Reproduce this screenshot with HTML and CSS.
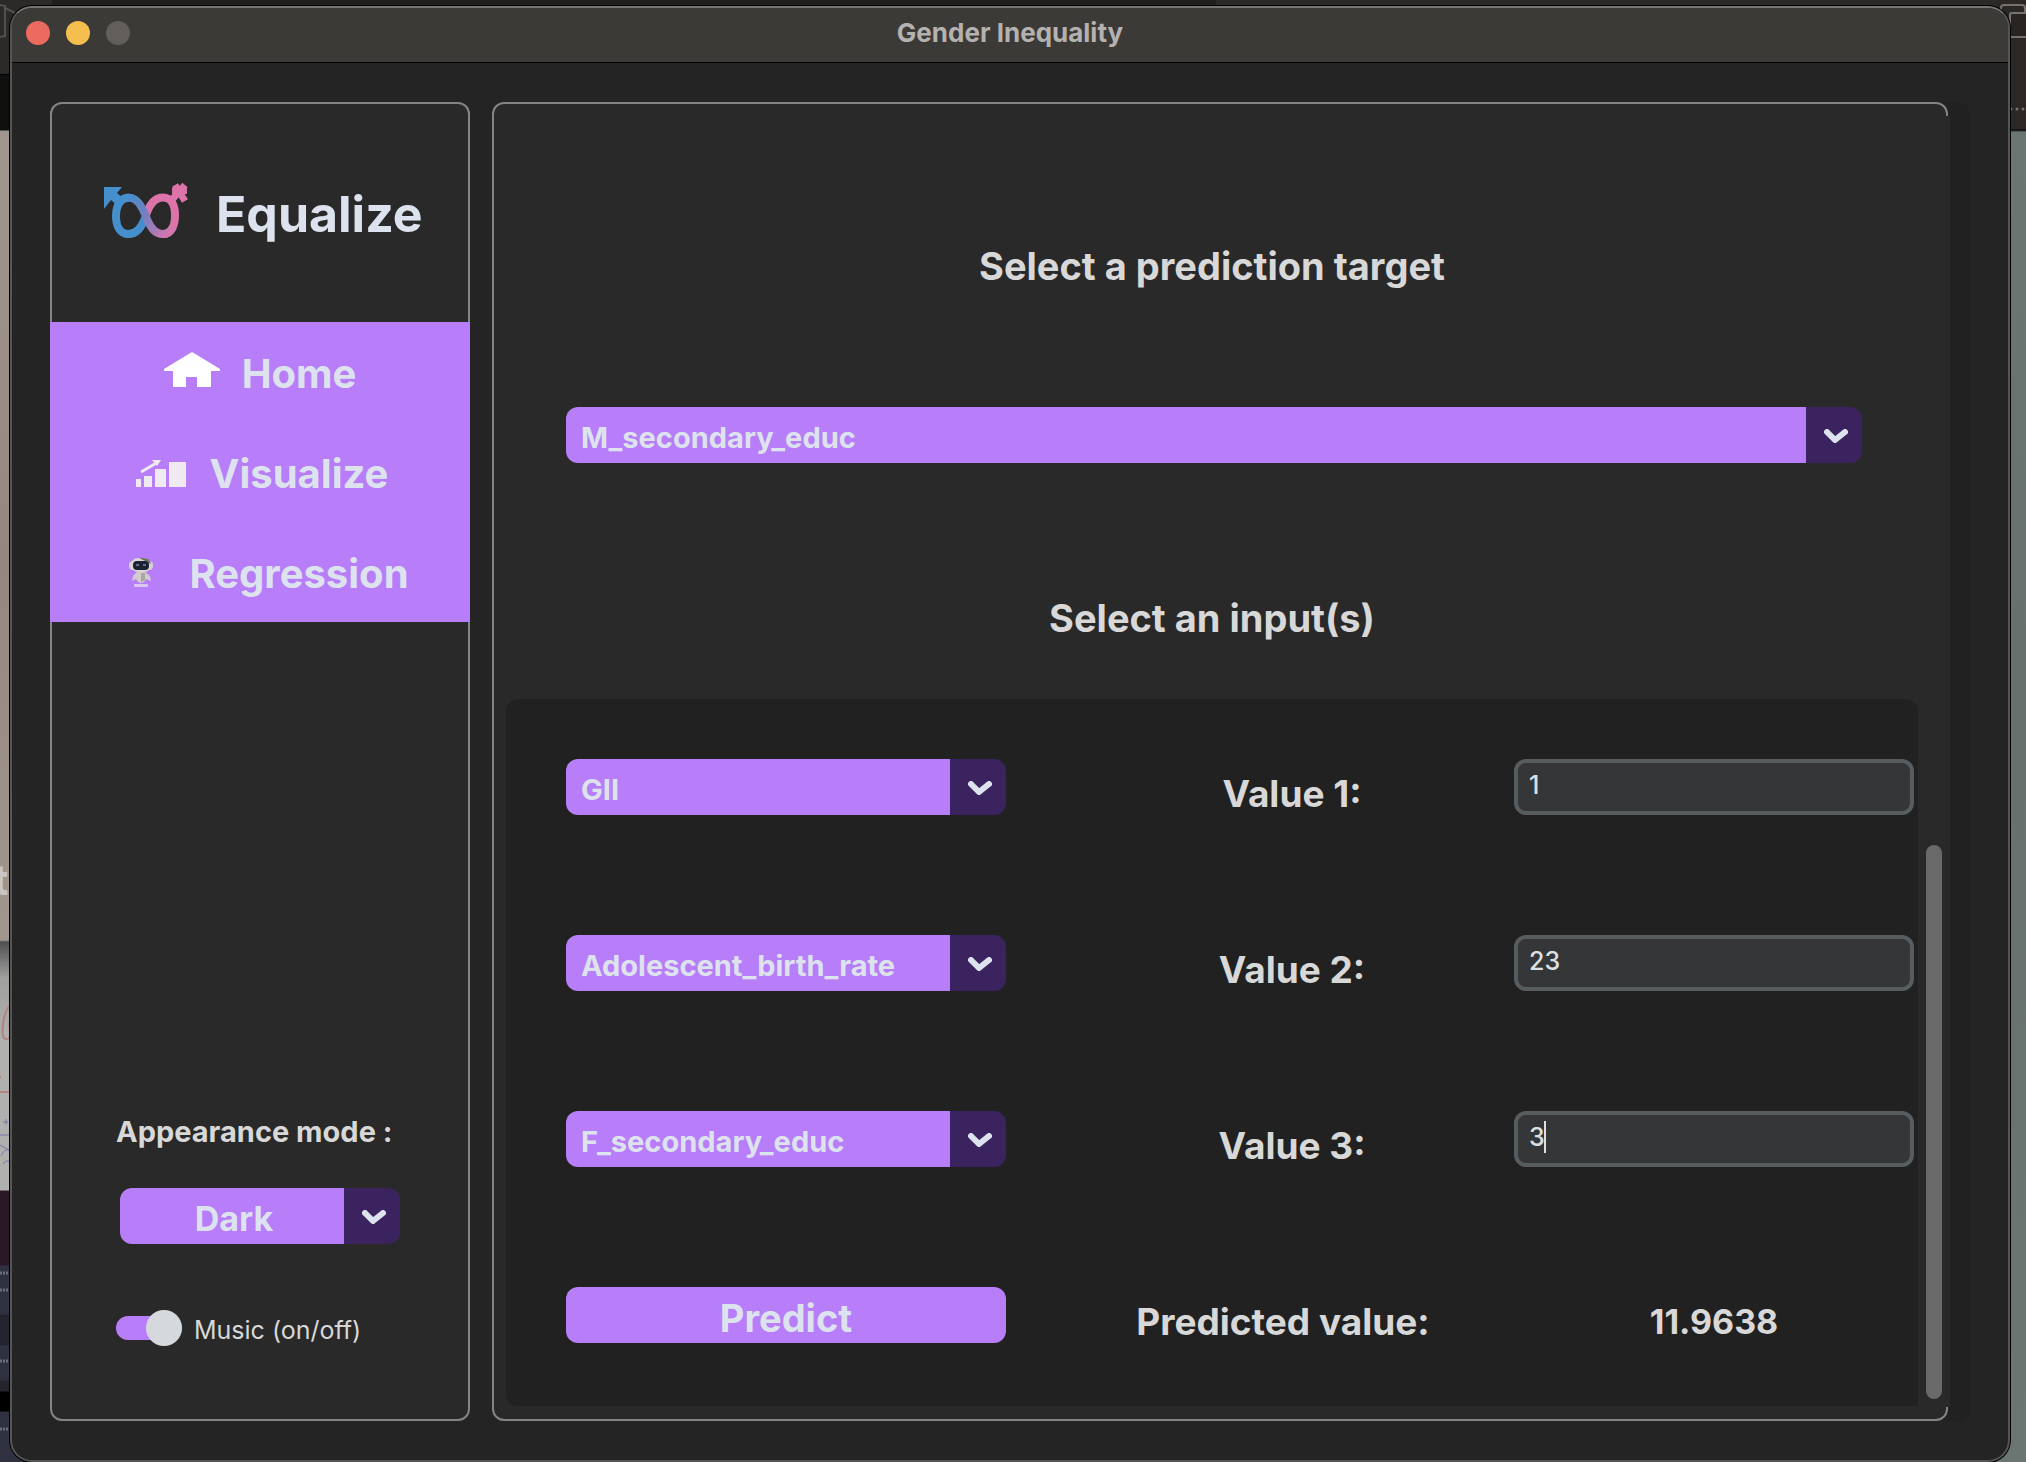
FILE: index.html
```html
<!DOCTYPE html>
<html lang="en">
<head>
<meta charset="utf-8">
<meta name="viewport" content="width=device-width, initial-scale=1">
<title>Gender Inequality</title>
<link rel="stylesheet" href="styles.css">
</head>
<body>
<div class="desktop" aria-hidden="true">
  <div class="desktop-top"></div>
  <div class="desktop-left">
    <svg width="30" height="1462" viewBox="0 0 30 1462" fill="none">
      <path d="M0 5l5 1v30l-5 1M5 8l10 5" stroke="#54504d" stroke-width="2"/>
      <path d="M0 967v2M9 1006q-5 8-6 18q-2 16 4 15t2-16M0 1076v2M0 1092h9" stroke="#b08480" stroke-width="2"/>
      <path d="M3 1122h5M6 1119v6M0 1135h9M0 1145l9 5M1 1156q4-8 8-6M3 1164q2-4 6-3" stroke="#8473a8" stroke-width="1"/>
      <path d="M0 1273h9M0 1290h9M0 1361h9M0 1429h9" stroke="#6a6c7b" stroke-width="3" stroke-dasharray="2 1"/>
    </svg>
    <span class="desktop-letter">t</span>
  </div>
  <div class="desktop-right">
    <svg width="30" height="140" viewBox="0 0 30 140" fill="none">
      <rect x="5" y="5" width="24" height="22" rx="3" stroke="#77726f" stroke-width="2"/>
      <rect x="14" y="13" width="24" height="24" rx="2" fill="#292422" stroke="#77726f" stroke-width="2"/>
      <path d="M15 109h14" stroke="#77726f" stroke-width="3" stroke-linecap="round" stroke-dasharray="0 6"/>
    </svg>
  </div>
</div>

<div class="window">
  <header class="titlebar">
    <div class="lights">
      <button class="light light-close" type="button" aria-label="Close"></button>
      <button class="light light-minimize" type="button" aria-label="Minimize"></button>
      <button class="light light-zoom" type="button" aria-label="Zoom" disabled></button>
    </div>
    <h1 class="window-title">Gender Inequality</h1>
  </header>

  <div class="content">
    <aside class="sidebar">
      <div class="brand">
        <svg class="logo" width="84" height="62" viewBox="0 0 84 62" fill="none" aria-hidden="true">
          <defs>
            <linearGradient id="loop" gradientUnits="userSpaceOnUse" x1="22" y1="16" x2="66" y2="50">
              <stop offset="0" stop-color="#458fcd"/><stop offset="0.45" stop-color="#7480c0"/><stop offset="0.75" stop-color="#a67bb8"/><stop offset="1" stop-color="#d476ac"/>
            </linearGradient>
          </defs>
          <path d="M42 34C37 47 32 52 24.500 52C16 52 12 44 12 34C12 23 17 15.500 25 15.500" stroke="#458fcd" stroke-width="8"/>
          <path d="M42 33C46 21 51 15.500 59 15.500C67 15.500 71 23 71 33C71 44 67 52 59 52" stroke="#dc74aa" stroke-width="8"/>
          <path d="M17 18C28 12 35 18 41 32C46 46 51 52 59 52C64 52 67 49 69 45" stroke="url(#loop)" stroke-width="8"/>
          <path d="M0 5h18l-5 6 7 6-6 7-7-6-7 9z" fill="#458fcd"/>
          <path d="M71 3L81 19M81 3L66 20" stroke="#dc74aa" stroke-width="7"/>
          <path d="M68 9h15" stroke="#dc74aa" stroke-width="6"/>
        </svg>
        <span class="brand-name">Equalize</span>
      </div>

      <nav class="nav">
        <button class="nav-item" type="button">
          <svg class="nav-icon" width="56" height="56" viewBox="0 0 56 56" aria-hidden="true">
            <path d="M28 8L56 25v2h-9v16H33V33H22v10H9V27H0v-2z" fill="#fff"/>
          </svg>
          <span>Home</span>
        </button>
        <button class="nav-item" type="button">
          <svg class="nav-icon" width="56" height="56" viewBox="0 0 56 56" aria-hidden="true">
            <path d="M4 35h5v8H4zM12 32h8v11h-8zM23 25h11v18H23zM37 18h17v25H37z" fill="#efeaf0"/>
            <path d="M9 28L26 18" stroke="#efeaf0" stroke-width="3"/>
            <path d="M20 16h9l-4 6z" fill="#efeaf0"/>
          </svg>
          <span>Visualize</span>
        </button>
        <button class="nav-item" type="button">
          <svg class="nav-icon" width="56" height="56" viewBox="0 0 56 56" aria-hidden="true">
            <rect x="18" y="17" width="24" height="9" rx="4" fill="#d5d0d8"/>
            <rect x="20" y="14" width="20" height="14" rx="7" fill="#d9d6d3"/>
            <path d="M28 14h5q6 0 7 6l-6-3z" fill="#77716c"/>
            <rect x="22" y="17" width="16" height="9" rx="4" fill="#1b2033"/>
            <path d="M25 21h3M32 21h3" stroke="#62718a" stroke-width="2"/>
            <path d="M26 28h8l5 4 1 5-5-2q-2 4-5 4t-5-4l-4 2 1-5z" fill="#d3cccf"/>
            <path d="M30 29h4v7l-4 2z" fill="#aaa69c"/>
            <rect x="23" y="40" width="14" height="3" rx="1" fill="#dcc5f2"/>
          </svg>
          <span>Regression</span>
        </button>
      </nav>

      <div class="settings">
        <label class="settings-label" for="appearance">Appearance mode :</label>
        <div class="combo combo-centered">
          <select id="appearance"><option>Dark</option><option>Light</option><option>System</option></select>
          <svg class="combo-arrow" width="24" height="14" viewBox="0 0 24 14" aria-hidden="true"><path d="M3 3l8 8 10-8"/></svg>
        </div>
        <label class="switch"><input type="checkbox" role="switch" checked><span>Music (on/off)</span></label>
      </div>
    </aside>

    <main class="main">
      <div class="panel">
        <form class="form">
          <label class="heading" for="target">Select a prediction target</label>
          <div class="combo combo-target">
            <select id="target"><option>M_secondary_educ</option></select>
            <svg class="combo-arrow" width="24" height="14" viewBox="0 0 24 14" aria-hidden="true"><path d="M3 3l8 8 10-8"/></svg>
          </div>
          <h2 class="heading heading-inputs">Select an input(s)</h2>

          <div class="inputs">
            <div class="combo">
              <select aria-label="Input 1"><option>GII</option></select>
              <svg class="combo-arrow" width="24" height="14" viewBox="0 0 24 14" aria-hidden="true"><path d="M3 3l8 8 10-8"/></svg>
            </div>
            <label class="value-label" for="value1">Value 1:</label>
            <div class="field"><input id="value1" type="text" value="1"></div>

            <div class="combo">
              <select aria-label="Input 2"><option>Adolescent_birth_rate</option></select>
              <svg class="combo-arrow" width="24" height="14" viewBox="0 0 24 14" aria-hidden="true"><path d="M3 3l8 8 10-8"/></svg>
            </div>
            <label class="value-label" for="value2">Value 2:</label>
            <div class="field"><input id="value2" type="text" value="23"></div>

            <div class="combo">
              <select aria-label="Input 3"><option>F_secondary_educ</option></select>
              <svg class="combo-arrow" width="24" height="14" viewBox="0 0 24 14" aria-hidden="true"><path d="M3 3l8 8 10-8"/></svg>
            </div>
            <label class="value-label" for="value3">Value 3:</label>
            <div class="field"><input id="value3" type="text" value="3"><span class="caret"></span></div>

            <button class="predict" type="button">Predict</button>
            <span class="value-label result-label">Predicted value:</span>
            <output class="result">11.9638</output>
          </div>
        </form>
        <div class="scroll-track" aria-hidden="true"><div class="scroll-thumb"></div></div>
      </div>
    </main>
  </div>
</div>
</body>
</html>
```
FILE: styles.css
```css
:root {
  --accent: #b87df8;
  --accent-dark: #3b2360;
  --panel: #292929;
  --line: #848484;
  --text: #d8d8d8;
  --on-accent: #dde3ee;
}

* { box-sizing: border-box; }

body {
  margin: 0;
  min-height: 100vh;
  display: flex;
  flex-direction: column;
  background: #2a2624;
  color: var(--text);
  font-family: Inter, "Open Sans", sans-serif;
}

button, select, input { font: inherit; margin: 0; }

/* Desktop behind the window */
.desktop {
  position: absolute;
  inset: 0;
  z-index: -1;
  overflow: hidden;
}
.desktop-top {
  position: absolute;
  inset: 0 0 auto;
  height: 20px;
  background: linear-gradient(90deg, #2d2a28 52px, #211d1b 52px 60%, #2c2927 60%);
}
.desktop-left, .desktop-right {
  position: absolute;
  top: 0;
  bottom: 0;
  width: 30px;
  overflow: hidden;
}
.desktop-left {
  left: 0;
  background: linear-gradient(#2c2a28 0 74px, #000 74px 75px, #10100e 75px 130px, #a1968f 131px, #94877f 560px, #a1968f 940px, #4f4f4f 942px, #a0a09f 978px, #b0b0af 1040px 1190px, #2a1826 1191px 1265px, #303140 1266px 1314px, #23242e 1315px 1345px, #303140 1346px 1380px, #23242e 1381px 1391px, #000 1392px 1411px, #303140 1412px);
}
.desktop-right {
  right: 0;
  background: linear-gradient(#2b2725 0 129px, #000 130px, #6b7571 132px, #67706d 700px, #6b7572);
}
.desktop-letter {
  position: absolute;
  left: -7px;
  top: 856px;
  font-size: 42px;
  line-height: 48px;
  font-weight: 700;
  color: #c9c5c2;
}

/* Window frame */
.window {
  flex: 1;
  display: flex;
  flex-direction: column;
  margin: 6px 16px 0 10px;
  border: 2px solid #555;
  border-top-color: #777573;
  border-radius: 22px;
  box-shadow: 0 0 0 1px #000;
  background: #242424;
  overflow: hidden;
}
.titlebar {
  display: grid;
  grid-template-columns: 1fr auto 1fr;
  align-items: center;
  height: 55px;
  padding: 0 14px 4px;
  border-bottom: 1px solid #000;
  background: #3c3a37;
}
.lights { display: flex; gap: 16px; }
.light {
  width: 24px;
  height: 24px;
  padding: 0;
  border: 0;
  border-radius: 50%;
}
.light-close { background: #ed6a5e; }
.light-minimize { background: #f5bf4f; }
.light-zoom { background: #625e5b; }
.window-title {
  margin: 0;
  font-size: 26px;
  line-height: 32px;
  font-weight: 700;
  color: #b4b2b0;
}

.content {
  flex: 1;
  display: grid;
  grid-template-columns: 420px 1fr;
  gap: 22px;
  padding: 39px 38px;
}

/* Sidebar */
.sidebar {
  display: flex;
  flex-direction: column;
  border: 2px solid var(--line);
  border-radius: 12px;
  background: var(--panel);
}
.brand {
  display: flex;
  align-items: center;
  gap: 28px;
  height: 218px;
  padding: 0 0 0 52px;
}
.brand-name {
  padding-top: 2px;
  font-size: 50px;
  line-height: 60px;
  font-weight: 700;
  color: var(--on-accent);
}
.nav { margin: 0 -2px; }
.nav-item {
  display: flex;
  align-items: center;
  justify-content: center;
  gap: 22px;
  width: 100%;
  height: 100px;
  padding: 0;
  border: 0;
  background: var(--accent);
  color: var(--on-accent);
  font-size: 40px;
  line-height: 48px;
  font-weight: 700;
}
.nav-item span { padding-top: 4px; }
.settings {
  display: flex;
  flex-direction: column;
  align-items: flex-start;
  margin-top: auto;
  padding: 0 68px 69px;
}
.settings-label {
  margin: 0 0 38px -4px;
  font-size: 29px;
  line-height: 36px;
  font-weight: 700;
  white-space: nowrap;
}
.settings .combo { width: 100%; }
.switch {
  display: flex;
  align-items: center;
  gap: 12px;
  margin: 66px 0 0 -4px;
  font-size: 25px;
  line-height: 40px;
}
.switch input {
  appearance: none;
  display: flex;
  align-items: center;
  justify-content: flex-end;
  width: 66px;
  height: 24px;
  margin-bottom: 4px;
  border-radius: 12px;
  background: var(--accent);
}
.switch input::before {
  content: "";
  flex: none;
  width: 36px;
  height: 36px;
  border-radius: 50%;
  background: #d5d9de;
}

/* Drop-downs */
.combo {
  position: relative;
  height: 56px;
}
.combo select {
  appearance: none;
  width: 100%;
  height: 100%;
  padding: 5px 56px 0 15px;
  border: 0;
  border-radius: 12px;
  background: linear-gradient(90deg, var(--accent) calc(100% - 56px), var(--accent-dark) calc(100% - 56px));
  color: var(--on-accent);
  font-size: 29px;
  font-weight: 700;
}
.combo-centered select {
  padding-left: 4px;
  font-size: 34px;
  text-align: center;
  text-align-last: center;
}
.combo-arrow {
  position: absolute;
  right: 14px;
  top: 22px;
  fill: none;
  stroke: var(--on-accent);
  stroke-width: 6;
  stroke-linecap: round;
  stroke-linejoin: round;
  pointer-events: none;
}

/* Prediction panel */
.main {
  display: grid;
  padding-right: 22px;
  border-radius: 12px;
  background: #212121;
}
.panel {
  display: grid;
  grid-template-columns: 1fr 28px;
  border: 2px solid var(--line);
  border-radius: 12px;
  background: var(--panel);
}
.form {
  display: flex;
  flex-direction: column;
  padding: 138px 0 13px 12px;
}
.heading {
  margin: 0;
  font-size: 38px;
  line-height: 48px;
  font-weight: 700;
  text-align: center;
}
.heading-inputs { margin: 131px 0 57px; }
.combo-target { margin: 117px 56px 0 60px; }
.inputs {
  flex: 1;
  display: grid;
  grid-template-columns: 440fr 508fr 400fr;
  grid-auto-rows: 56px;
  row-gap: 120px;
  padding: 60px 4px 60px 60px;
  border-radius: 12px 12px 0 12px;
  background: #212121;
}
.value-label, .result {
  padding: 13px 0 0;
  font-size: 37px;
  line-height: 44px;
  font-weight: 700;
  text-align: center;
}
.value-label { padding-left: 64px; }
.result-label { padding-left: 46px; }
.result { font-size: 34px; }
.field { position: relative; }
.field input {
  width: 100%;
  height: 56px;
  padding: 0 11px 4px;
  border: 4px solid #575c5f;
  border-radius: 12px;
  background: #353638;
  color: #dce0e3;
  font-size: 25px;
  font-weight: 500;
}
.caret {
  position: absolute;
  left: 30px;
  top: 10px;
  width: 2px;
  height: 32px;
  background: #dce0e3;
}
.predict {
  padding: 5px 0 0;
  border: 0;
  border-radius: 12px;
  background: var(--accent);
  color: var(--on-accent);
  font-size: 38px;
  line-height: 44px;
  font-weight: 700;
}
.scroll-track {
  display: flex;
  flex-direction: column;
  justify-content: flex-end;
  margin: 12px -4px 12px 0;
  padding: 0 8px 8px;
  background: var(--panel);
}
.scroll-track::before { content: ""; flex: 730; }
.scroll-thumb {
  flex: 554;
  border-radius: 8px;
  background: #696969;
}
```
